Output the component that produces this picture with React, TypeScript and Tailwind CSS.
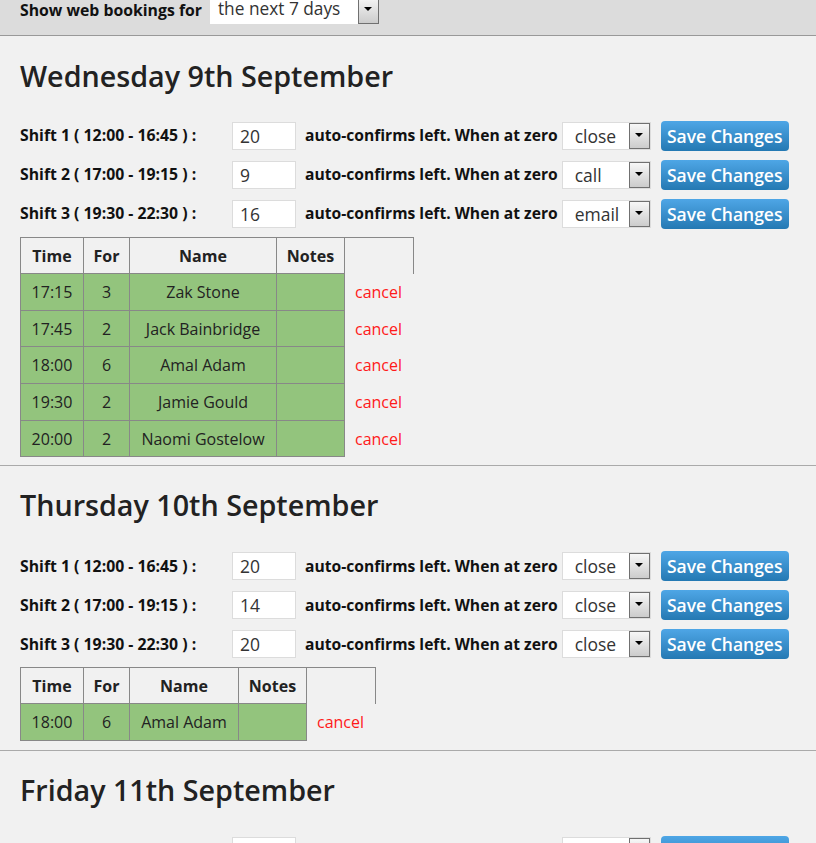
import React from 'react';

type Booking = { time: string; covers: number; name: string };
type Shift = { label: string; left: number; action: string };
type Day = {
  title: string;
  shifts: Shift[];
  bookings: Booking[];
  nameW: string;
};

const days: Day[] = [
  {
    title: 'Wednesday 9th September',
    shifts: [
      { label: 'Shift 1 ( 12:00 - 16:45 ) :', left: 20, action: 'close' },
      { label: 'Shift 2 ( 17:00 - 19:15 ) :', left: 9, action: 'call' },
      { label: 'Shift 3 ( 19:30 - 22:30 ) :', left: 16, action: 'email' },
    ],
    bookings: [
      { time: '17:15', covers: 3, name: 'Zak Stone' },
      { time: '17:45', covers: 2, name: 'Jack Bainbridge' },
      { time: '18:00', covers: 6, name: 'Amal Adam' },
      { time: '19:30', covers: 2, name: 'Jamie Gould' },
      { time: '20:00', covers: 2, name: 'Naomi Gostelow' },
    ],
    nameW: 'w-[147px]',
  },
  {
    title: 'Thursday 10th September',
    shifts: [
      { label: 'Shift 1 ( 12:00 - 16:45 ) :', left: 20, action: 'close' },
      { label: 'Shift 2 ( 17:00 - 19:15 ) :', left: 14, action: 'close' },
      { label: 'Shift 3 ( 19:30 - 22:30 ) :', left: 20, action: 'close' },
    ],
    bookings: [{ time: '18:00', covers: 6, name: 'Amal Adam' }],
    nameW: 'w-[109px]',
  },
  {
    title: 'Friday 11th September',
    shifts: [
      { label: 'Shift 1 ( 12:00 - 16:45 ) :', left: 20, action: 'close' },
      { label: 'Shift 2 ( 17:00 - 19:15 ) :', left: 20, action: 'close' },
    ],
    bookings: [],
    nameW: 'w-[109px]',
  },
];

const Arrow: React.FC = () => (
  <span className="flex h-full w-[21px] shrink-0 items-center justify-center border border-[#707070] bg-gradient-to-b from-[#f7f7f7] to-[#cccccc]">
    <span className="mb-[3px] h-0 w-0 border-x-[4px] border-t-[4px] border-x-transparent border-t-black" />
  </span>
);

const FakeSelect: React.FC<{ value: string }> = ({ value }) => (
  <div className="flex h-[28px] w-[89px] items-stretch border border-[#dcdcdc] bg-white">
    <span className="flex-1 pl-[12px] text-[17.5px] leading-[26px] text-[#333]">{value}</span>
    <Arrow />
  </div>
);

const ShiftRow: React.FC<{ shift: Shift }> = ({ shift }) => (
  <div className="flex h-[30px] items-center">
    <span className="w-[212px] text-[15.8px] font-bold text-[#111]">{shift.label}</span>
    <div className="h-[28px] w-[64px] border border-[#dcdcdc] bg-white pl-[7px] text-[17.5px] leading-[26px] text-[#333]">
      {shift.left}
    </div>
    <span className="ml-[9px] mr-[4px] text-[15.65px] font-bold text-[#111]">auto-confirms left. When at zero</span>
    <FakeSelect value={shift.action} />
    <button className="ml-[10px] h-[30px] w-[128px] rounded-[4px] bg-gradient-to-b from-[#4ea6e6] to-[#2479b3] text-[17.5px] font-semibold text-white">
      Save Changes
    </button>
  </div>
);

const DaySection: React.FC<{ day: Day; first?: boolean }> = ({ day, first }) => (
  <section className={`px-[20px] ${first ? 'pb-[8px] pt-[20px]' : 'border-t border-[#aaaaaa] pb-[9px] pt-[19px]'}`}>
    <h2 className="text-[28.7px] font-semibold leading-[40px] text-[#222]">{day.title}</h2>
    <div className={`${first ? 'mt-[25px]' : 'mt-[26px]'} flex flex-col gap-[9px]`}>
      {day.shifts.map((s, i) => (
        <ShiftRow key={i} shift={s} />
      ))}
    </div>
    {day.bookings.length > 0 && (
      <table className="mt-[8px] border-collapse text-[16px] text-[#222]">
        <thead>
          <tr className="h-[36px]">
            <th className="w-[63px] border border-[#888] font-bold">Time</th>
            <th className="w-[46px] border border-[#888] font-bold">For</th>
            <th className={`${day.nameW} border border-[#888] font-bold`}>Name</th>
            <th className="w-[68px] border border-[#888] font-bold">Notes</th>
            <th className="w-[69px] border-r border-t border-[#888]" />
          </tr>
        </thead>
        <tbody>
          {day.bookings.map((b, i) => (
            <tr key={i} className="h-[36.7px]">
              <td className="border border-[#888] bg-[#93c47d] text-center">{b.time}</td>
              <td className="border border-[#888] bg-[#93c47d] text-center">{b.covers}</td>
              <td className="border border-[#888] bg-[#93c47d] text-center">{b.name}</td>
              <td className="border border-[#888] bg-[#93c47d]" />
              <td className="pl-[10px] text-[#ff1a1a]">cancel</td>
            </tr>
          ))}
        </tbody>
      </table>
    )}
  </section>
);

export default function App() {
  return (
    <div className="h-[843px] overflow-hidden bg-[#f1f1f1] font-['Open_Sans',sans-serif]">
      <div className="h-[36px] overflow-hidden border-b border-[#999] bg-[#dcdcdc]">
        <div className="-mt-[4px] flex h-[28px] items-center px-[20px]">
          <span className="mr-[8px] pt-[1px] text-[15.8px] font-bold text-[#111]">Show web bookings for</span>
          <div className="flex h-[28px] w-[169px] items-stretch bg-white">
            <span className="flex-1 pl-[8px] text-[17.3px] leading-[26px] text-[#333]">the next 7 days</span>
            <Arrow />
          </div>
        </div>
      </div>
      {days.map((d, i) => (
        <DaySection key={i} day={d} first={i === 0} />
      ))}
    </div>
  );
}
